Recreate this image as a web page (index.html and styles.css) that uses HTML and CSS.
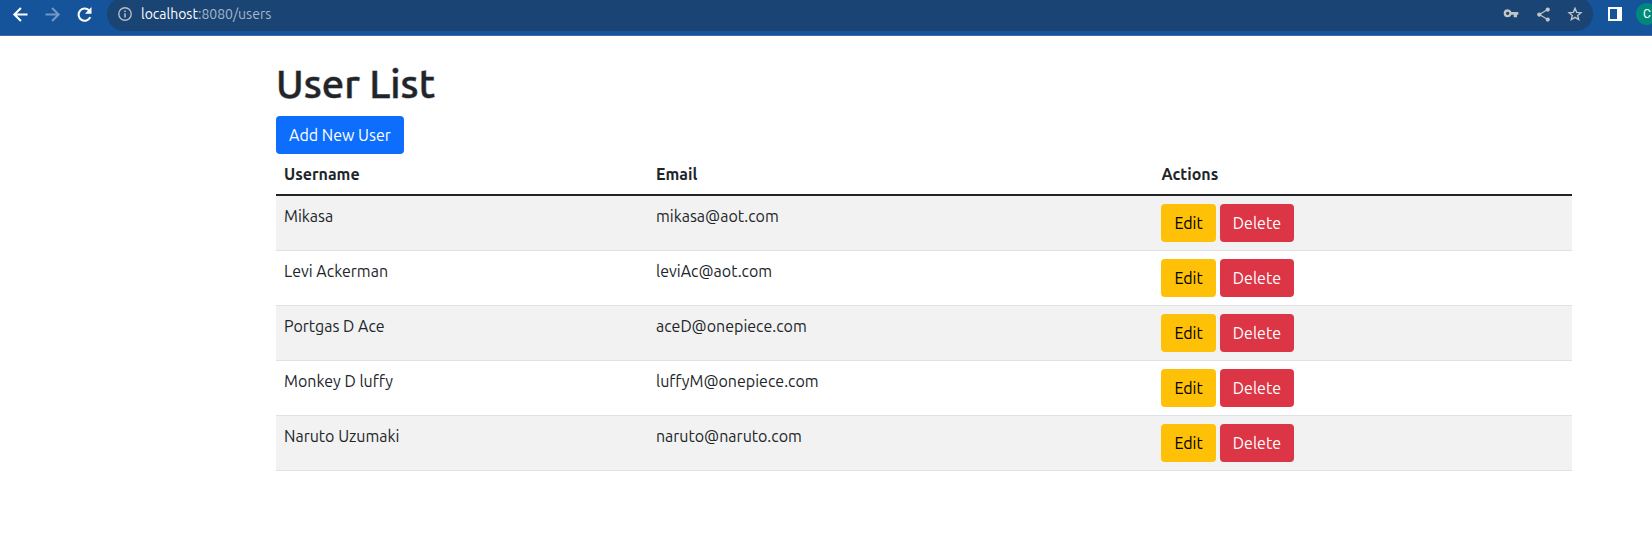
FILE: index.html
```html
<!DOCTYPE html>
<html lang="en">
<head>
<meta charset="utf-8">
<title>User List</title>
<link rel="stylesheet" href="styles.css">
</head>
<body>
<header class="toolbar">
  <nav class="nav-buttons" aria-label="Browser navigation">
    <button class="icon-button" aria-label="Back"><svg class="nav-icon" viewBox="0 0 24 24"><path d="M20 12H5M12.500 4.500 5 12l7.500 7.500" fill="none" stroke="currentColor" stroke-width="2.400"/></svg></button>
    <button class="icon-button icon-muted" aria-label="Forward"><svg class="nav-icon" viewBox="0 0 24 24"><path d="M4 12h15M11.500 4.500 19 12l-7.500 7.500" fill="none" stroke="currentColor" stroke-width="2.400"/></svg></button>
    <button class="icon-button" aria-label="Reload"><svg class="nav-icon" viewBox="0 0 24 24"><path d="M18.600 15A7 7 0 1 1 17.200 7.200L18.500 8.500" fill="none" stroke="currentColor" stroke-width="2.400"/><path d="M20 3.500V11h-7.500z" fill="currentColor"/></svg></button>
  </nav>
  <div class="address">
    <svg class="info-icon" viewBox="0 0 14 14"><circle cx="7" cy="7" r="6.200" fill="none" stroke="currentColor" stroke-width="1.400"/><path d="M6.200 6.200h1.600v4.300H6.200zM6.200 3.400h1.600V5H6.200z" fill="currentColor"/></svg>
    <div class="url"><span class="url-host">localhost</span>:8080/users</div>
    <button class="icon-button icon-soft" aria-label="Passwords"><svg class="small-icon" viewBox="0 0 24 24"><path d="M12.650 10A6 6 0 0 0 7 6a6 6 0 0 0 0 12 6 6 0 0 0 5.650-4H16v4h5v-4h2v-4H12.650zM7 14.500a2.500 2.500 0 1 1 0-5 2.500 2.500 0 0 1 0 5z" fill="currentColor" fill-rule="evenodd" transform="translate(0 -1)"/></svg></button>
    <button class="icon-button icon-soft" aria-label="Share"><svg class="share-icon" viewBox="0 0 24 24"><path d="M18 16.080c-.76 0-1.440.3-1.960.77L8.910 12.700c.05-.23.090-.46.090-.7s-.04-.47-.09-.7l7.050-4.110c.54.5 1.250.81 2.040.81 1.660 0 3-1.340 3-3s-1.340-3-3-3-3 1.340-3 3c0 .24.040.47.090.7L8.040 9.810C7.500 9.310 6.790 9 6 9c-1.660 0-3 1.340-3 3s1.340 3 3 3c.79 0 1.500-.31 2.040-.81l7.120 4.160c-.05.21-.08.430-.08.650 0 1.610 1.310 2.920 2.920 2.920s2.920-1.310 2.920-2.920-1.310-2.920-2.920-2.920z" fill="currentColor"/></svg></button>
    <button class="icon-button icon-soft" aria-label="Bookmark"><svg class="small-icon" viewBox="0 0 24 24"><path d="m12 3.500 2.500 6 6.500.5-5 4.200 1.600 6.300L12 17l-5.600 3.500L8 14.200 3 10l6.500-.5z" fill="none" stroke="currentColor" stroke-width="2"/></svg></button>
  </div>
  <button class="icon-button" aria-label="Side panel"><svg class="panel-icon" viewBox="0 0 14 14"><path d="M0 0h14v14H0zM2 2v10h7V2z" fill="currentColor" fill-rule="evenodd"/></svg></button>
  <button class="avatar" aria-label="Profile">C</button>
</header>
<main class="container">
  <h1 class="title">User List</h1>
  <a class="btn btn-primary" href="#new">Add New User</a>
  <table class="table">
    <colgroup><col class="col-name"><col class="col-email"><col class="col-actions"></colgroup>
    <thead><tr><th scope="col">Username</th><th scope="col">Email</th><th scope="col">Actions</th></tr></thead>
    <tbody>
      <tr><td>Mikasa</td><td>mikasa@aot.com</td><td><div class="actions"><a class="btn btn-warning" href="#edit">Edit</a><a class="btn btn-danger" href="#delete">Delete</a></div></td></tr>
      <tr><td>Levi Ackerman</td><td>leviAc@aot.com</td><td><div class="actions"><a class="btn btn-warning" href="#edit">Edit</a><a class="btn btn-danger" href="#delete">Delete</a></div></td></tr>
      <tr><td>Portgas D Ace</td><td>aceD@onepiece.com</td><td><div class="actions"><a class="btn btn-warning" href="#edit">Edit</a><a class="btn btn-danger" href="#delete">Delete</a></div></td></tr>
      <tr><td>Monkey D luffy</td><td>luffyM@onepiece.com</td><td><div class="actions"><a class="btn btn-warning" href="#edit">Edit</a><a class="btn btn-danger" href="#delete">Delete</a></div></td></tr>
      <tr><td>Naruto Uzumaki</td><td>naruto@naruto.com</td><td><div class="actions"><a class="btn btn-warning" href="#edit">Edit</a><a class="btn btn-danger" href="#delete">Delete</a></div></td></tr>
    </tbody>
  </table>
</main>
</body>
</html>
```
FILE: styles.css
```css
* { box-sizing: border-box; }
body {
  margin: 0;
  background: #fff;
  color: #212529;
  font: 400 16px/24px Ubuntu, "Open Sans", sans-serif;
}
button {
  border: 0;
  padding: 0;
  background: none;
  color: inherit;
  font: inherit;
}
.toolbar {
  display: flex;
  height: 36px;
  padding-left: 4px;
  overflow: hidden;
  background: #15539b;
  border-bottom: 1px solid #3a6ea9;
  color: #fff;
}
.nav-buttons { display: flex; margin-right: 7px; }
.icon-button {
  display: flex;
  flex: none;
  align-items: center;
  justify-content: center;
  width: 32px;
  height: 28px;
}
.icon-muted { color: #7398c4; }
.icon-soft { color: #c2c4c6; }
.nav-icon { width: 21px; height: 21px; }
.small-icon { width: 16px; height: 16px; }
.share-icon { width: 17px; height: 17px; }
.panel-icon { width: 14px; height: 14px; }
.address {
  display: flex;
  flex: 1;
  align-items: center;
  height: 34px;
  margin: -3px 6px 0 0;
  padding: 0 2px 0 11px;
  border-radius: 17px;
  background: #194473;
}
.info-icon { width: 14px; height: 14px; color: #b4bcc6; }
.url {
  flex: 1;
  margin-left: 9px;
  color: #a8b8ca;
  font-size: 14px;
}
.url-host { color: #fff; }
.avatar {
  flex: none;
  width: 22px;
  height: 22px;
  margin: 3px -6px 0 5px;
  border-radius: 50%;
  background: #00897b;
  font: 400 12px/22px Roboto, sans-serif;
}
.container { padding: 24px 80px 68px 276px; }
.title {
  margin: 0 0 8px;
  font-size: 40px;
  font-weight: 500;
  line-height: 48px;
  -webkit-text-stroke: 1px rgba(33, 37, 41, 0.5);
}
.btn {
  display: inline-block;
  padding: 6px 12px;
  border: 1px solid transparent;
  border-radius: 4px;
  text-align: center;
  text-decoration: none;
  white-space: nowrap;
  vertical-align: top;
}
.btn-primary { background: #0d6efd; color: #fff; }
.btn-warning { background: #ffc107; color: #000; }
.btn-danger { background: #dc3545; color: #fff; }
.table {
  width: 100%;
  border-spacing: 0;
  table-layout: fixed;
}
.col-name { width: 28.7%; }
.col-email { width: 39%; }
.col-actions { width: 32.3%; }
.table th, .table td {
  padding: 8px;
  border-bottom: 1px solid #dee2e6;
  text-align: left;
  vertical-align: top;
}
.table th { border-bottom: 2px solid #212529; font-weight: 700; }
.table tbody tr:nth-child(odd) { background: #f2f2f2; }
.actions { display: flex; gap: 4px; }
```
